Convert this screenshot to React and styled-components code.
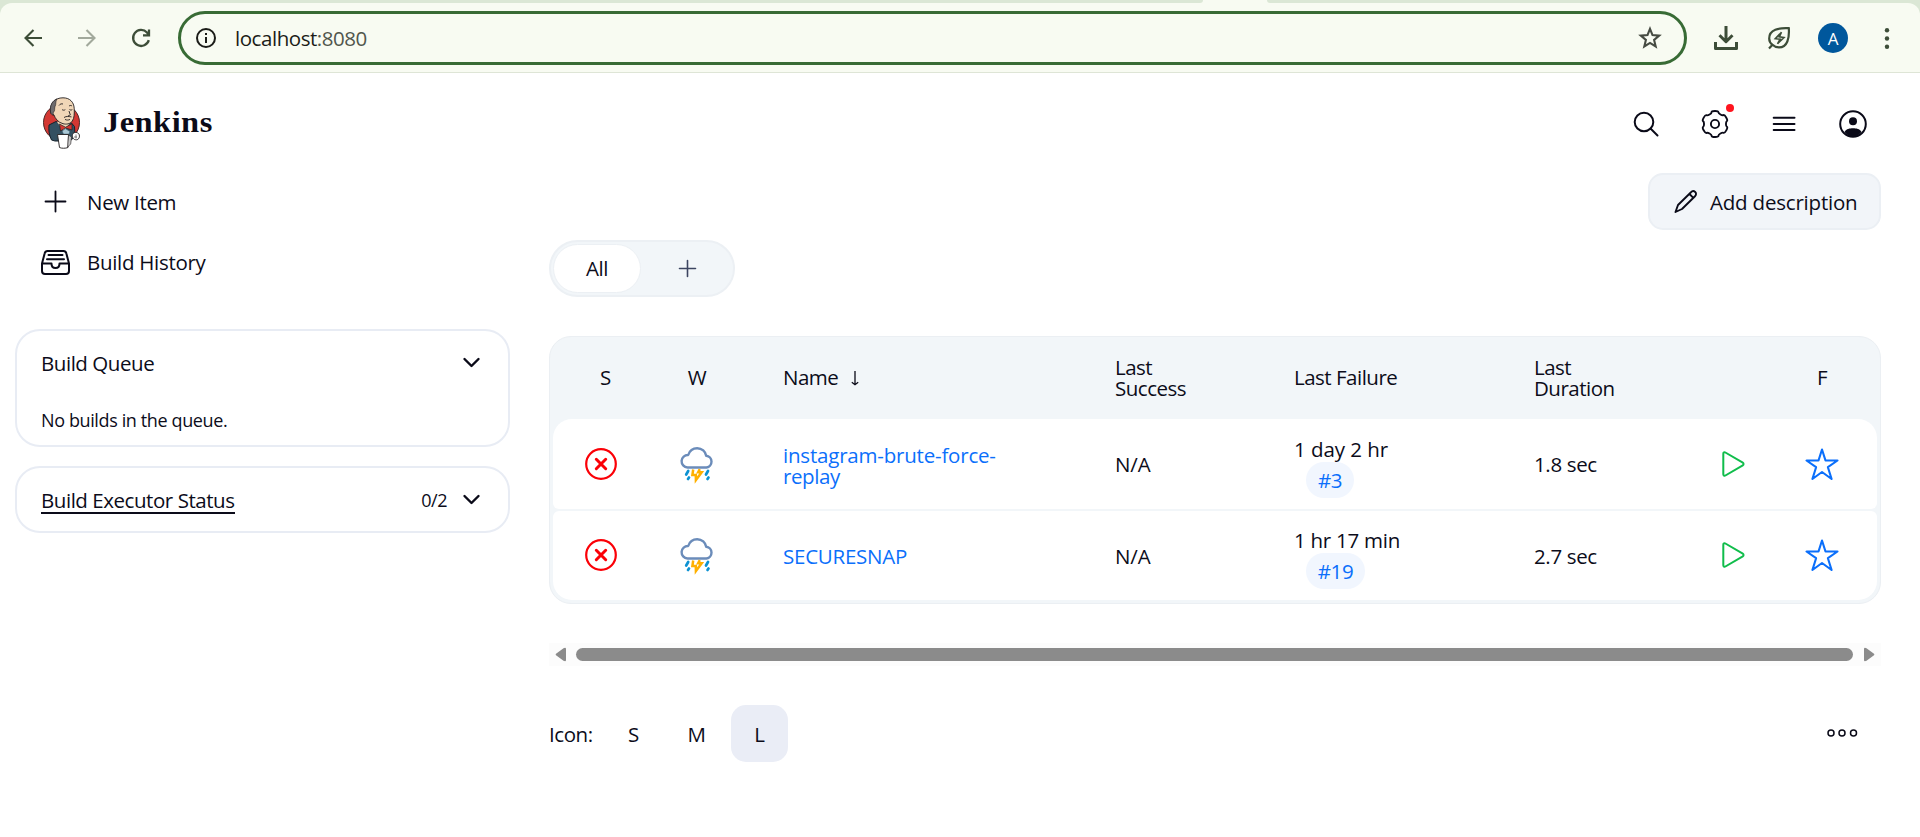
import React from "react";
import styled, { createGlobalStyle, css } from "styled-components";

const ink = "#0c0c1a";
const ui = `"Open Sans", "Noto Sans", sans-serif`;

const Global = createGlobalStyle`
  *, *::before, *::after { box-sizing: border-box; }
  html, body { margin: 0; padding: 0; background: #fff; }
  body { font-family: ${ui}; font-size: 20.5px; color: ${ink}; overflow: hidden; }
  svg { display: block; flex: none; overflow: visible; }
  a { color: inherit; text-decoration: none; }
`;

const Label = styled.span`
  display: inline-block;
  white-space: nowrap;
  font-size: ${(p) => p.$size || 20.5}px;
  letter-spacing: ${(p) => p.$ls ?? -0.45}px;
  line-height: ${(p) => p.$lh || 28}px;
  transform: translateY(${(p) => p.$dy || 0}px);
`;

/* Browser chrome */
const TabStrip = styled.div`
  height: 3px;
  display: grid;
  grid-template-columns: 1203px 64px 1fr;
  background: #f8fbf2;
`;
const StripPart = styled.div`
  background: #dbe7d5;
  border-radius: ${(p) => (p.$left ? "0 0 6px 0" : "0 0 0 6px")};
  grid-column: ${(p) => (p.$left ? 1 : 3)};
`;
const ToolbarWrap = styled.div`
  background: #dbe7d5;
`;
const Toolbar = styled.div`
  height: 70px;
  background: #f8fbf2;
  border-bottom: 1px solid #dee5d6;
  border-radius: 12px 12px 0 0;
  display: flex;
  align-items: center;
  padding: 1px 22px 0 24px;
`;
const NavIcons = styled.div`
  display: flex;
  gap: 36px;
  width: 154px;
`;
const AddressBar = styled.div`
  width: 1509px;
  height: 54px;
  border: 3px solid #386b35;
  border-radius: 27px;
  display: flex;
  align-items: center;
  padding: 0 23px 0 15px;
  margin-bottom: 1px;
  color: #1b1c18;
`;
const Url = styled.div`
  flex: 1;
  padding-left: 19px;
  span + span { color: #51564c; }
`;
const BrowserActions = styled.div`
  flex: 1;
  display: flex;
  align-items: center;
  padding-left: 27px;
`;
const EcoSlot = styled.div`
  margin-left: 30px;
`;
const Avatar = styled.div`
  width: 30px;
  height: 30px;
  margin: 0 37px 0 28px;
  border-radius: 50%;
  background: #00579c;
  color: #fff;
  display: grid;
  place-items: center;
  font: 17px/1 "Open Sans", sans-serif;
`;

/* Jenkins header */
const Header = styled.header`
  height: 100px;
  padding: 0 53px 0 43px;
  display: flex;
  align-items: center;
  justify-content: space-between;
`;
const Brand = styled.a`
  display: flex;
  align-items: center;
  gap: 22px;
`;
const BrandName = styled.span`
  font: bold 28.5px/36px "Liberation Serif", serif;
  letter-spacing: 0.4px;
  color: #0b0b18;
  transform: scaleX(1.14);
  transform-origin: left center;
`;
const HeaderActions = styled.nav`
  display: flex;
  gap: 41px;
  padding-top: 2px;
`;
const ActionIcon = styled.div`
  position: relative;
  width: 28px;
  height: 28px;
`;
const Dot = styled.span`
  position: absolute;
  top: -6px;
  right: -5px;
  width: 8px;
  height: 8px;
  border-radius: 50%;
  background: #ff141e;
`;

/* Page layout */
const Page = styled.div`
  display: grid;
  grid-template-columns: 495px 1332px;
  column-gap: 39px;
  padding-left: 15px;
`;
const Side = styled.aside`
  display: flex;
  flex-direction: column;
`;
const Tasks = styled.div`
  padding-left: 26px;
  margin-bottom: 36px;
`;
const Task = styled.a`
  height: 60px;
  display: flex;
  align-items: center;
  gap: 17px;
  padding-bottom: ${(p) => p.$lift || 2}px;
`;
const Card = styled.section`
  height: ${(p) => p.$h}px;
  border: 2px solid #e8ecf4;
  border-radius: 25px;
  padding: 0 24px;
  margin-bottom: 19px;
`;
const CardHead = styled.div`
  height: 64px;
  display: flex;
  align-items: center;
  justify-content: space-between;
  padding-right: 4px;
`;
const CardTools = styled.div`
  display: flex;
  align-items: center;
  gap: 16px;
`;
const CardBody = styled.div`
  padding-top: 10px;
`;
const HeadLink = styled.a`
  height: 25px;
  display: flex;
  align-items: center;
  border-bottom: 2px solid ${ink};
  margin-top: 3px;
`;

const Main = styled.main`
  display: flex;
  flex-direction: column;
`;
const DescriptionButton = styled.button`
  align-self: flex-end;
  width: 233px;
  height: 57px;
  border: 2px solid #ebeff4;
  border-radius: 15px;
  background: #f2f5f9;
  color: ${ink};
  font-family: inherit;
  padding: 0 0 0 24px;
  display: flex;
  align-items: center;
  gap: 12px;
`;
const Tabs = styled.div`
  width: 186px;
  height: 57px;
  margin: 10px 0 39px;
  padding: 2px 0 2px 2px;
  border: 2px solid #ecf0f4;
  border-radius: 29px;
  background: #f2f6f9;
  display: flex;
`;
const Tab = styled.a`
  height: 49px;
  flex: none;
  width: ${(p) => (p.$active ? 88 : 92)}px;
  display: grid;
  place-items: center;
  border-radius: 25px;
  ${(p) => p.$active && css`background: #fff; border: 1px solid #ecf0f4;`}
`;

/* Jobs table */
const Table = styled.div`
  height: 268px;
  border: 1px solid #ebeff3;
  border-radius: 22px;
  background: #f2f6f9;
  padding: 0 3px;
`;
const columns = css`
  display: grid;
  grid-template-columns: 96px 96px 332px 179px 240px 189px 96px 82px;
  align-items: center;
`;
const HeadRow = styled.div`
  ${columns}
  height: 82px;
`;
const Row = styled.div`
  ${columns}
  height: ${(p) => p.$h}px;
  background: #fff;
  margin-bottom: 2px;
  border-radius: ${(p) => (p.$last ? "6px 6px 19px 19px" : "19px 19px 6px 6px")};
`;
const Cell = styled.div`
  padding-left: 38px;
`;
const IconCell = styled.div`
  display: flex;
  justify-content: center;
  padding-left: ${(p) => p.$shift || 0}px;
  padding-bottom: ${(p) => p.$lift || 0}px;
`;
const JobLink = styled.a`
  color: #0b6ffb;
`;
const SortName = styled.div`
  display: flex;
  align-items: center;
  gap: 13px;
`;
const Stack = styled.div`
  display: flex;
  flex-direction: column;
  align-items: flex-start;
`;
const Failure = styled(Stack)`
  padding-top: ${(p) => p.$top}px;
`;
const Badge = styled.a`
  height: 36px;
  width: ${(p) => p.$w}px;
  margin-left: 12px;
  border-radius: 18px;
  background: #f1f6fe;
  color: #0b6ffb;
  display: grid;
  place-items: center;
`;

/* Scrollbar and footer */
const Scrollbar = styled.div`
  height: 23px;
  margin-top: 39px;
  background: #fcfcfc;
  display: flex;
  align-items: center;
  padding: 0 6px 0;
`;
const Thumb = styled.div`
  width: 1277px;
  height: 13px;
  margin: 0 11px 1px 10px;
  border-radius: 7px;
  background: #8b8b8b;
`;
const Footer = styled.div`
  margin-top: 39px;
  height: 57px;
  display: flex;
  align-items: center;
`;
const SizeLabel = styled.div`
  width: 56px;
`;
const SizeButton = styled.a`
  width: 57px;
  height: 57px;
  margin-right: 6px;
  border-radius: 15px;
  display: grid;
  place-items: center;
  background: ${(p) => (p.$active ? "#eaedf6" : "transparent")};
`;
const More = styled.div`
  margin-left: auto;
  padding-right: 23px;
  padding-bottom: 1px;
`;

const Svg = ({ w = 24, h = w, box, sw = 2, color = "currentColor", children }) => (
  <svg width={w} height={h} viewBox={box || `0 0 ${w} ${h}`} fill="none" stroke={color} strokeWidth={sw}>
    {children}
  </svg>
);

const BackIcon = () => (
  <Svg w={18} sw={2.1} color="#3d4d38"><path d="M18 9H1.5M9.5 1L1.5 9l8 8" /></Svg>
);
const ForwardIcon = () => (
  <Svg w={18} sw={2.1} color="#a2a99c"><path d="M0 9h16.5M8.5 1l8 8-8 8" /></Svg>
);
const ReloadIcon = () => (
  <Svg w={18} sw={2.3} color="#3d4d38"><path d="M16.8 11.2A8 8 0 1 1 15 3.5L17 6M17 0.5V6.3H11" /></Svg>
);
const InfoIcon = () => (
  <Svg w={20} sw={2} color="#1b1c18"><circle cx="10" cy="10" r="9" /><path d="M10 9v6M10 5v2.1" /></Svg>
);
const BookmarkIcon = () => (
  <Svg w={22} sw={2.1} color="#464b42">
    <path d="M11 1.9l2.5 6.2 6.7.5-5.1 4.3 1.6 6.6L11 15.9l-5.700 3.600 1.600-6.600L1.800 8.600l6.700-.5z" />
  </Svg>
);
const DownloadIcon = () => (
  <Svg w={24} sw={3} color="#3d4d38"><path d="M12 0v15M5.5 9.3l6.5 6.4 6.5-6.4M1.5 16v6.5h21V16" strokeLinejoin="round" /></Svg>
);
const LeafIcon = () => (
  <Svg w={22} sw={2.200} color="#3d4d38">
    <path d="M1 21.500l3.500-3.700M20.800 1.200C11 0.600 1.200 2.800 1.200 11.400c0 2.500 1.200 4.800 3.300 6.400 1.700 1.700 3.800 2.600 6.500 2.600 8.500 0 10.500-9.400 9.800-19.200z" />
    <path d="M13.500 5.200L7.300 11.700l4.800.5L9.500 16.800l6.500-6.300-4.700-.6z" strokeWidth="1.6" />
  </Svg>
);
const DotsIcon = () => (
  <svg width="4" height="21" fill="#3d4d38">
    <circle cx="2" cy="2.2" r="2.2" /><circle cx="2" cy="10.500" r="2.200" /><circle cx="2" cy="18.800" r="2.200" />
  </svg>
);

const JenkinsLogo = () => (
  <svg width="38" height="52" viewBox="0 0 38 52">
    <circle cx="18.500" cy="25.500" r="18" fill="#d33833" stroke="#3a1d1b" strokeWidth="0.9" />
    <path d="M6 28l7-3.500 9 4 6-3 3.500 4 .5 10-5 4.500H12L8.500 43c-2.500-5-3-10-2.500-15z" fill="#335061" stroke="#15212b" />
    <path d="M14 25l7 9 6-8-6-3z" fill="#f0d6b7" />
    <path d="M7.500 15C6.500 6 12 .8 20 .8c7 0 10.800 4.400 11.200 10.400.3 5 .2 10-2 13-2.200 3-6.200 3.300-9.200 2.500-4.800-1.200-7.800-5.200-9-8.700-2 0-3-1-3.500-3z" fill="#f0d6b7" stroke="#231f20" strokeWidth="0.9" />
    <path d="M7.500 15C6.700 8 9.500 3.500 14 1.900 12 5 13.500 7 12 9.500c-.8 2 .3 4-1.300 5.500-.7.900-.7 2 .3 3-2 0-3-1-3.500-3z" fill="#6d6b6d" stroke="#231f20" strokeWidth="0.6" />
    <path d="M16 8.500c1-1.500 2.500-2 4-1.500M26 9c1.200-.8 2.300-.6 3 0M19 12.500c1 .9 2.300.9 3.300.1M26.500 12.500c1 .7 1.800.7 2.800.1M26 14l1.300 4c-.7.8-1.500.8-2.300.4M21 20.500c2.500-1.700 5-.9 7.500-.6M22 22.400c1.700 1 3.500.8 5 0" fill="none" stroke="#231f20" strokeWidth="0.9" />
    <path d="M16.500 27l6 3.200 6.500-3.400v6.200L22.500 31 17.500 34z" fill="#d33833" stroke="#231f20" strokeWidth="0.7" />
    <path d="M19 34l3.500-2.400 4.500 3-1 2.600h-5.500z" fill="#a9c7d4" stroke="#335061" strokeWidth="0.6" />
    <path d="M14.500 37.500h11L25 50.500c-2.500 1-6.500 1-8.500 0z" fill="#fff" stroke="#231f20" strokeWidth="0.9" />
    <path d="M25.500 38l3 2-.8 7-3 3z" fill="#c9c9c9" stroke="#231f20" strokeWidth="0.6" />
    <path d="M30 36.500c2-2 6-1 6.300 1.500.8 3-1.500 5.500-4 4.700-2.500-.3-3.800-4-2.300-6.200z" fill="#fff" stroke="#231f20" strokeWidth="0.9" />
    <path d="M31 40h3M33 37.500v4" stroke="#555" strokeWidth="0.7" />
  </svg>
);

const SearchIcon = () => (
  <Svg w={28} sw={2} color="#0a0a18"><circle cx="12" cy="12" r="9.3" /><path d="M18.500 18.500l7 7" strokeLinecap="round" /></Svg>
);

/* Six-lobed gear outline, smoothed through the midpoints of its corner points. */
const gearPath = (() => {
  const pts = [];
  for (let k = 0; k < 6; k++) {
    [[-15, 13.4], [14, 13.4], [18, 11.2], [42, 11.2]].forEach(([da, r]) => {
      const a = ((k * 60 - 90 + da) * Math.PI) / 180;
      pts.push([14 + r * Math.cos(a), 14 + r * Math.sin(a)]);
    });
  }
  const mid = (a, b) => `${((a[0] + b[0]) / 2).toFixed(2)} ${((a[1] + b[1]) / 2).toFixed(2)}`;
  const n = pts.length;
  let d = `M${mid(pts[n - 1], pts[0])}`;
  pts.forEach((p, i) => {
    d += `Q${p[0].toFixed(2)} ${p[1].toFixed(2)} ${mid(p, pts[(i + 1) % n])}`;
  });
  return d + "z";
})();
const GearIcon = () => (
  <Svg w={28} sw={1.9} color="#0a0a18"><path d={gearPath} /><circle cx="14" cy="14" r="4.1" /></Svg>
);
const MenuIcon = () => (
  <Svg w={28} sw={2} color="#0a0a18"><path d="M3.700 7.700h20.800M3.700 14h20.800M3.700 20h20.800" strokeLinecap="round" /></Svg>
);
const UserIcon = () => (
  <Svg w={28} sw={2} color="#0a0a18">
    <circle cx="14" cy="14" r="12.8" />
    <circle cx="14" cy="11.3" r="4" fill="#0a0a18" stroke="none" />
    <path d="M5.500 22c2-3.200 5-3.700 8.500-3.700s6.500.5 8.500 3.700c-2.500 3-5 4.500-8.500 4.500S8 25 5.500 22z" fill="#0a0a18" stroke="none" />
  </Svg>
);
const PlusIcon = ({ s, sw, color }) => (
  <Svg w={29} h={29} sw={sw} color={color}>
    <path d={`M14.5 ${14.5 - s / 2}v${s}M${14.5 - s / 2} 14.5h${s}`} strokeLinecap="round" />
  </Svg>
);
const HistoryIcon = () => (
  <Svg w={29} h={25} sw={2} color="#0a0a18">
    <path d="M1 13.500V21a3 3 0 0 0 3 3h21a3 3 0 0 0 3-3v-7.500L25.300 3.300A3 3 0 0 0 22.500 1h-16a3 3 0 0 0-2.800 2.300L1 13.500h9.500c0 2.500 1.500 4.500 4 4.500s4-2 4-4.500H28M7.500 5h14M6 9.300h17" strokeLinejoin="round" strokeLinecap="round" />
  </Svg>
);
const Chevron = () => (
  <Svg w={17} h={10} sw={2.4} color="#0a0a18"><path d="M1.500 1l7 7 7-7" strokeLinecap="round" strokeLinejoin="round" /></Svg>
);
const PencilIcon = () => (
  <Svg w={24} sw={1.9} color="#0a0a18">
    <path d="M1.500 22L4 15 17 2.200c1.200-1.300 3-1.300 4.200-.2s1.100 3-.2 4.200L8 19zM15.500 4l3.800 3.800" strokeLinejoin="round" />
  </Svg>
);
const SortIcon = () => (
  <Svg w={8} h={15} sw={1.300} color="#0a0a18"><path d="M4 0v13.500M0.800 11.300L4 13.800l3.200-2.500" /></Svg>
);
const FailedIcon = () => (
  <Svg w={32} sw={2.2} color="#fb0007">
    <circle cx="16" cy="16" r="14.8" /><path d="M11.300 11.300l9.400 9.400M20.700 11.300l-9.400 9.400" strokeWidth="3" strokeLinecap="round" />
  </Svg>
);
const StormIcon = () => (
  <Svg w={34} h={34} sw={2.4} color="#6b8cba">
    <path d="M7.500 20.500a6.200 6.200 0 0 1 .7-12.500C9.500 4 13 1.200 17.200 1.200c4.800 0 8.300 3.400 9 7.600a5.900 5.900 0 0 1 .3 11.700z" strokeLinejoin="round" />
    <path d="M8.200 24L6.200 27.500M9 30.500l-1 1.500M28 24l-2 3.500M28.500 30.500l-1 1.500" stroke="#0d92d2" strokeWidth="2.700" strokeLinecap="round" />
    <path d="M13.200 22.500l-.8 5.500h3.400l.1 5 5.800-7.800h-3.500l1.600-3" stroke="#ffb000" strokeWidth="2.500" />
  </Svg>
);
const PlayIcon = () => (
  <Svg w={23} h={26} sw={2} color="#10bd4b">
    <path d="M1.300 2.700v20.600c0 1.100 1.100 1.800 2.100 1.200l17.400-10.200c1-.6 1-2 0-2.600L3.400 1.500c-1-.6-2.100.1-2.100 1.200z" />
  </Svg>
);
const StarIcon = () => (
  <Svg w={34} h={32} sw={2.100} color="#0b6ffb">
    <path d="M17 1.500L20.500 12.500H32.500L22.900 19.200 26.600 31 17 24 7.400 31l3.700-11.800L1.500 12.500H13.500z" strokeLinejoin="round" />
  </Svg>
);
const ScrollArrow = ({ flip }) => (
  <svg width="11" height="15" viewBox="0 0 11 15">
    <path d="M1 6.800L8.500 1.200Q11 0 11 2v11q0 2-2.500.8L1 8.200q-.8-.7 0-1.400z" fill="#8b8b8b" transform={flip ? "translate(11 0) scale(-1 1)" : undefined} />
  </svg>
);
const MoreIcon = () => (
  <Svg w={31} h={8} sw={1.5} color="#0a0a18">
    <circle cx="4" cy="4" r="3" /><circle cx="15" cy="4" r="3" /><circle cx="26.500" cy="4" r="3" />
  </Svg>
);

const jobs = [
  { name: ["instagram-brute-force-", "replay"], ls: [-0.2, -0.4], failed: "1 day 2 hr", failedLs: -0.05, build: "#3", badge: 48, duration: "1.8 sec" },
  { name: ["SECURESNAP"], ls: [-0.25], failed: "1 hr 17 min", failedLs: -0.25, build: "#19", badge: 59, duration: "2.7 sec" },
];

const Lines = ({ items, ls = [], dy = 0 }) => (
  <Stack>
    {items.map((t, i) => (
      <Label key={t} $lh={21} $ls={ls[i] ?? -0.5} $dy={dy}>{t}</Label>
    ))}
  </Stack>
);

export default function App() {
  return (
    <>
      <Global />
      <TabStrip><StripPart $left /><StripPart /></TabStrip>
      <ToolbarWrap>
        <Toolbar>
          <NavIcons><BackIcon /><ForwardIcon /><ReloadIcon /></NavIcons>
          <AddressBar>
            <InfoIcon />
            <Url><Label>localhost</Label><Label>:8080</Label></Url>
            <BookmarkIcon />
          </AddressBar>
          <BrowserActions>
            <DownloadIcon />
            <EcoSlot><LeafIcon /></EcoSlot>
            <Avatar>A</Avatar>
            <DotsIcon />
          </BrowserActions>
        </Toolbar>
      </ToolbarWrap>
      <Header>
        <Brand><JenkinsLogo /><BrandName>Jenkins</BrandName></Brand>
        <HeaderActions>
          <ActionIcon><SearchIcon /></ActionIcon>
          <ActionIcon><GearIcon /><Dot /></ActionIcon>
          <ActionIcon><MenuIcon /></ActionIcon>
          <ActionIcon><UserIcon /></ActionIcon>
        </HeaderActions>
      </Header>
      <Page>
        <Side>
          <Tasks>
            <Task $lift={4}><PlusIcon s={20} sw={1.8} color="#0a0a18" /><Label $dy={1} $ls={-0.3}>New Item</Label></Task>
            <Task><HistoryIcon /><Label $ls={-0.3}>Build History</Label></Task>
          </Tasks>
          <Card $h={118}>
            <CardHead><Label>Build Queue</Label><Chevron /></CardHead>
            <CardBody><Label $size={18} $ls={-0.38}>No builds in the queue.</Label></CardBody>
          </Card>
          <Card $h={67}>
            <CardHead>
              <HeadLink><Label $dy={-1}>Build Executor Status</Label></HeadLink>
              <CardTools><Label $size={18}>0/2</Label><Chevron /></CardTools>
            </CardHead>
          </Card>
        </Side>
        <Main>
          <DescriptionButton><PencilIcon /><Label $ls={-0.2}>Add description</Label></DescriptionButton>
          <Tabs>
            <Tab $active><Label $dy={-1}>All</Label></Tab>
            <Tab><PlusIcon s={16} sw={1.6} color="#3c4561" /></Tab>
          </Tabs>
          <Table>
            <HeadRow>
              <IconCell $shift={9}><Label $dy={-1}>S</Label></IconCell>
              <IconCell><Label $dy={-1}>W</Label></IconCell>
              <Cell><SortName><Label $dy={-1} $ls={-0.5}>Name</Label><SortIcon /></SortName></Cell>
              <Cell><Lines items={["Last", "Success"]} /></Cell>
              <Cell><Label $dy={-1} $ls={-0.5}>Last Failure</Label></Cell>
              <Cell><Lines items={["Last", "Duration"]} /></Cell>
              <IconCell />
              <IconCell><Label $dy={-1}>F</Label></IconCell>
            </HeadRow>
            {jobs.map((job, i) => (
              <Row key={job.build} $last={i === 1} $h={i === 1 ? 89 : 90}>
                <IconCell $lift={i}><FailedIcon /></IconCell>
                <IconCell $lift={i}><StormIcon /></IconCell>
                <Cell><JobLink><Lines items={job.name} ls={job.ls} dy={i === 1 ? 1 : 2} /></JobLink></Cell>
                <Cell><Label $ls={-0.1}>N/A</Label></Cell>
                <Cell>
                  <Failure $top={5 - i}>
                    <Label $lh={26} $ls={job.failedLs}>{job.failed}</Label>
                    <Badge $w={job.badge}><Label>{job.build}</Label></Badge>
                  </Failure>
                </Cell>
                <Cell><Label $ls={-0.35}>{job.duration}</Label></Cell>
                <IconCell $lift={i}><PlayIcon /></IconCell>
                <IconCell $lift={i}><StarIcon /></IconCell>
              </Row>
            ))}
          </Table>
          <Scrollbar><ScrollArrow /><Thumb /><ScrollArrow flip /></Scrollbar>
          <Footer>
            <SizeLabel><Label>Icon:</Label></SizeLabel>
            <SizeButton><Label>S</Label></SizeButton>
            <SizeButton><Label>M</Label></SizeButton>
            <SizeButton $active><Label>L</Label></SizeButton>
            <More><MoreIcon /></More>
          </Footer>
        </Main>
      </Page>
    </>
  );
}
